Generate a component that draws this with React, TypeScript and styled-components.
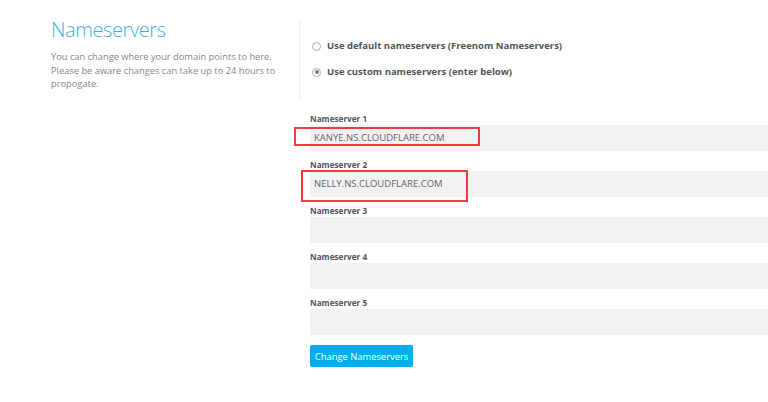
import React from "react";
import styled, { createGlobalStyle } from "styled-components";

const Global = createGlobalStyle`
  html, body { margin: 0; padding: 0; background: #fff; }
  body { font-family: "Open Sans", "Liberation Sans", sans-serif; }
`;

const Page = styled.div`
  display: grid;
  grid-template-columns: 248px 1fr;
  padding-left: 51px;
  padding-top: 16px;
  width: 768px;
  box-sizing: border-box;
  overflow: hidden;
`;

const Intro = styled.div`
  display: flex;
  flex-direction: column;
`;

const Title = styled.h1`
  margin: 0;
  font-weight: 300;
  font-size: 20px;
  letter-spacing: -0.4px;
  line-height: 28px;
  color: #3fb0e8;
`;

const Desc = styled.p`
  margin: 6px 0 0;
  font-size: 9.3px;
  line-height: 13.5px;
  color: #888;
  width: 235px;
`;

const FormCol = styled.div`
  display: flex;
  flex-direction: column;
`;

const Choices = styled.div`
  border-left: 1px solid #eeeeee;
  margin-top: 4px;
  height: 80px;
  padding: 18px 0 0 11px;
  box-sizing: border-box;
  display: flex;
  flex-direction: column;
  gap: 12px;
`;

const Choice = styled.label`
  display: flex;
  align-items: center;
  gap: 6px;
  font-size: 9.5px;
  font-weight: 700;
  color: #555;
  height: 14px;
`;

const Radio = styled.span<{ $checked?: boolean }>`
  width: 7px;
  height: 7px;
  border-radius: 50%;
  border: 1px solid #aaa;
  background: #fff;
  margin-left: 1px;
  margin-top: 2px;
  position: relative;
  flex: none;
  &::after {
    content: "";
    display: ${(p) => (p.$checked ? "block" : "none")};
    position: absolute;
    inset: 1.5px;
    border-radius: 50%;
    background: #777;
  }
`;

const Fields = styled.div`
  display: flex;
  flex-direction: column;
  padding: 12px 0 0 11px;
`;

const Field = styled.div`
  display: flex;
  flex-direction: column;
  margin-bottom: 7px;
`;

const Label = styled.div`
  font-size: 8.2px;
  font-weight: 700;
  color: #555;
  line-height: 13px;
`;

const InputWrap = styled.div`
  position: relative;
`;

const Input = styled.div`
  height: 26px;
  background: #f2f2f2;
  font-size: 9.5px;
  color: #666;
  line-height: 25px;
  padding-left: 4px;
  margin-right: -20px;
`;

const Highlight = styled.div<{ $l: number; $t: number; $w: number; $h: number }>`
  position: absolute;
  left: ${(p) => p.$l}px;
  top: ${(p) => p.$t}px;
  width: ${(p) => p.$w}px;
  height: ${(p) => p.$h}px;
  border: 2px solid #ee3b3f;
  box-sizing: border-box;
`;

const Button = styled.button`
  align-self: flex-start;
  margin-top: 3px;
  height: 22px;
  width: 103px;
  padding: 0;
  border: none;
  border-radius: 2px;
  background: #00aeef;
  color: #fff;
  font-family: "Open Sans", "Liberation Sans", sans-serif;
  font-size: 9.4px;
  font-weight: 500;
`;

const values = ["KANYE.NS.CLOUDFLARE.COM", "NELLY.NS.CLOUDFLARE.COM", "", "", ""];
const boxes: ({ l: number; t: number; w: number; h: number } | null)[] = [
  { l: -16, t: 2, w: 186, h: 19 },
  { l: -9, t: -1, w: 167, h: 32 },
  null,
  null,
  null,
];

export default function App() {
  return (
    <>
      <Global />
      <Page>
        <Intro>
          <Title>Nameservers</Title>
          <Desc>
            You can change where your domain points to here. Please be aware changes can take up to 24 hours to
            propogate.
          </Desc>
        </Intro>
        <FormCol>
          <Choices>
            <Choice>
              <Radio />
              Use default nameservers (Freenom Nameservers)
            </Choice>
            <Choice>
              <Radio $checked />
              Use custom nameservers (enter below)
            </Choice>
          </Choices>
          <Fields>
            {values.map((v, i) => {
              const b = boxes[i];
              return (
                <Field key={i}>
                  <Label>Nameserver {i + 1}</Label>
                  <InputWrap>
                    <Input>{v}</Input>
                    {b && <Highlight $l={b.l} $t={b.t} $w={b.w} $h={b.h} />}
                  </InputWrap>
                </Field>
              );
            })}
            <Button>Change Nameservers</Button>
          </Fields>
        </FormCol>
      </Page>
    </>
  );
}
